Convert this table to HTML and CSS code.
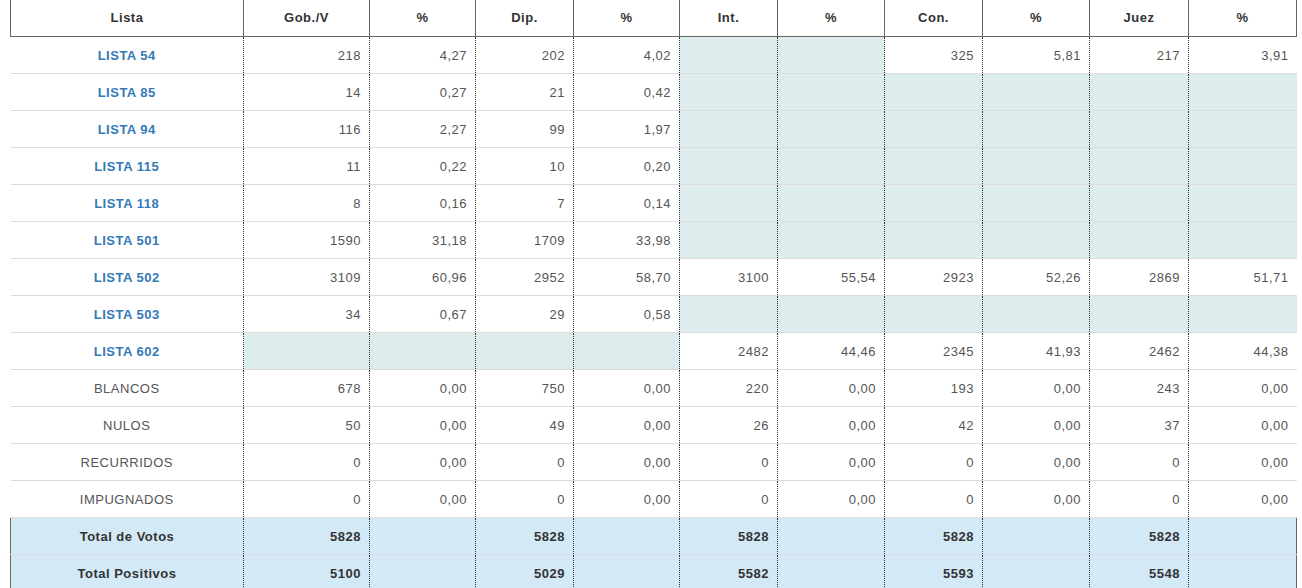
FILE: index.html
```html
<!DOCTYPE html>
<html lang="es">
<head>
<meta charset="utf-8">
<title>Resultados</title>
<link rel="stylesheet" href="styles.css">
</head>
<body>
<table class="res">
  <colgroup>
    <col class="c-lista"><col class="c-n1"><col class="c-p1"><col class="c-n"><col class="c-p1"><col class="c-n"><col class="c-p"><col class="c-n"><col class="c-p"><col class="c-nj"><col class="c-pj">
  </colgroup>
  <thead>
    <tr><th>Lista</th><th>Gob./V</th><th>%</th><th>Dip.</th><th>%</th><th>Int.</th><th>%</th><th>Con.</th><th>%</th><th>Juez</th><th>%</th></tr>
  </thead>
  <tbody>
    <tr><td class="name lk">LISTA 54</td><td>218</td><td>4,27</td><td>202</td><td>4,02</td><td class="na"></td><td class="na"></td><td>325</td><td>5,81</td><td>217</td><td>3,91</td></tr>
    <tr><td class="name lk">LISTA 85</td><td>14</td><td>0,27</td><td>21</td><td>0,42</td><td class="na"></td><td class="na"></td><td class="na"></td><td class="na"></td><td class="na"></td><td class="na"></td></tr>
    <tr><td class="name lk">LISTA 94</td><td>116</td><td>2,27</td><td>99</td><td>1,97</td><td class="na"></td><td class="na"></td><td class="na"></td><td class="na"></td><td class="na"></td><td class="na"></td></tr>
    <tr><td class="name lk">LISTA 115</td><td>11</td><td>0,22</td><td>10</td><td>0,20</td><td class="na"></td><td class="na"></td><td class="na"></td><td class="na"></td><td class="na"></td><td class="na"></td></tr>
    <tr><td class="name lk">LISTA 118</td><td>8</td><td>0,16</td><td>7</td><td>0,14</td><td class="na"></td><td class="na"></td><td class="na"></td><td class="na"></td><td class="na"></td><td class="na"></td></tr>
    <tr><td class="name lk">LISTA 501</td><td>1590</td><td>31,18</td><td>1709</td><td>33,98</td><td class="na"></td><td class="na"></td><td class="na"></td><td class="na"></td><td class="na"></td><td class="na"></td></tr>
    <tr><td class="name lk">LISTA 502</td><td>3109</td><td>60,96</td><td>2952</td><td>58,70</td><td>3100</td><td>55,54</td><td>2923</td><td>52,26</td><td>2869</td><td>51,71</td></tr>
    <tr><td class="name lk">LISTA 503</td><td>34</td><td>0,67</td><td>29</td><td>0,58</td><td class="na"></td><td class="na"></td><td class="na"></td><td class="na"></td><td class="na"></td><td class="na"></td></tr>
    <tr><td class="name lk">LISTA 602</td><td class="na"></td><td class="na"></td><td class="na"></td><td class="na"></td><td>2482</td><td>44,46</td><td>2345</td><td>41,93</td><td>2462</td><td>44,38</td></tr>
    <tr><td class="name">BLANCOS</td><td>678</td><td>0,00</td><td>750</td><td>0,00</td><td>220</td><td>0,00</td><td>193</td><td>0,00</td><td>243</td><td>0,00</td></tr>
    <tr><td class="name">NULOS</td><td>50</td><td>0,00</td><td>49</td><td>0,00</td><td>26</td><td>0,00</td><td>42</td><td>0,00</td><td>37</td><td>0,00</td></tr>
    <tr><td class="name">RECURRIDOS</td><td>0</td><td>0,00</td><td>0</td><td>0,00</td><td>0</td><td>0,00</td><td>0</td><td>0,00</td><td>0</td><td>0,00</td></tr>
    <tr><td class="name">IMPUGNADOS</td><td>0</td><td>0,00</td><td>0</td><td>0,00</td><td>0</td><td>0,00</td><td>0</td><td>0,00</td><td>0</td><td>0,00</td></tr>
    <tr class="total"><td class="name">Total de Votos</td><td>5828</td><td></td><td>5828</td><td></td><td>5828</td><td></td><td>5828</td><td></td><td>5828</td><td></td></tr>
    <tr class="total"><td class="name">Total Positivos</td><td>5100</td><td></td><td>5029</td><td></td><td>5582</td><td></td><td>5593</td><td></td><td>5548</td><td></td></tr>
  </tbody>
</table>
</body>
</html>
```

FILE: styles.css
```css
html, body {
  margin: 0;
  padding: 0;
  background: #fff;
}
body {
  padding: 0 5px 0 10px;
  font-family: "Liberation Sans", Arial, sans-serif;
  font-size: 13px;
  letter-spacing: 0.5px;
  color: #555;
}
.res {
  border-collapse: collapse;
  table-layout: fixed;
  width: 1287px;
}
.c-lista { width: 233px; }
.c-n1 { width: 126px; }
.c-p1 { width: 106px; }
.c-n { width: 98px; }
.c-p { width: 107px; }
.c-nj { width: 99px; }
.c-pj { width: 108px; }

.res th {
  height: 36px;
  padding: 0 8px;
  font-weight: bold;
  color: #333;
  text-align: center;
  border-left: 1px solid #666;
  border-right: 1px solid #666;
  border-bottom: 1px solid #666;
  box-sizing: border-box;
}
.res td {
  height: 37px;
  padding: 1px 8px 0;
  text-align: right;
  border-left: 1px dotted #333;
  border-right: 1px dotted #333;
  border-bottom: 1px solid #ddd;
  box-sizing: border-box;
}
.res td:first-child { border-left: none; }
.res td:last-child { border-right: none; }
.res td.name { text-align: center; }
.res td.lk { color: #337ab7; font-weight: bold; }
.res td.na { background: #ddeced; }
.res tr.total td {
  background: #d3e9f6;
  color: #333;
  font-weight: bold;
}
.res tr.total td:first-child { border-left: 1px solid #666; }
.res tr.total td:last-child { border-right: 1px solid #666; }
```
